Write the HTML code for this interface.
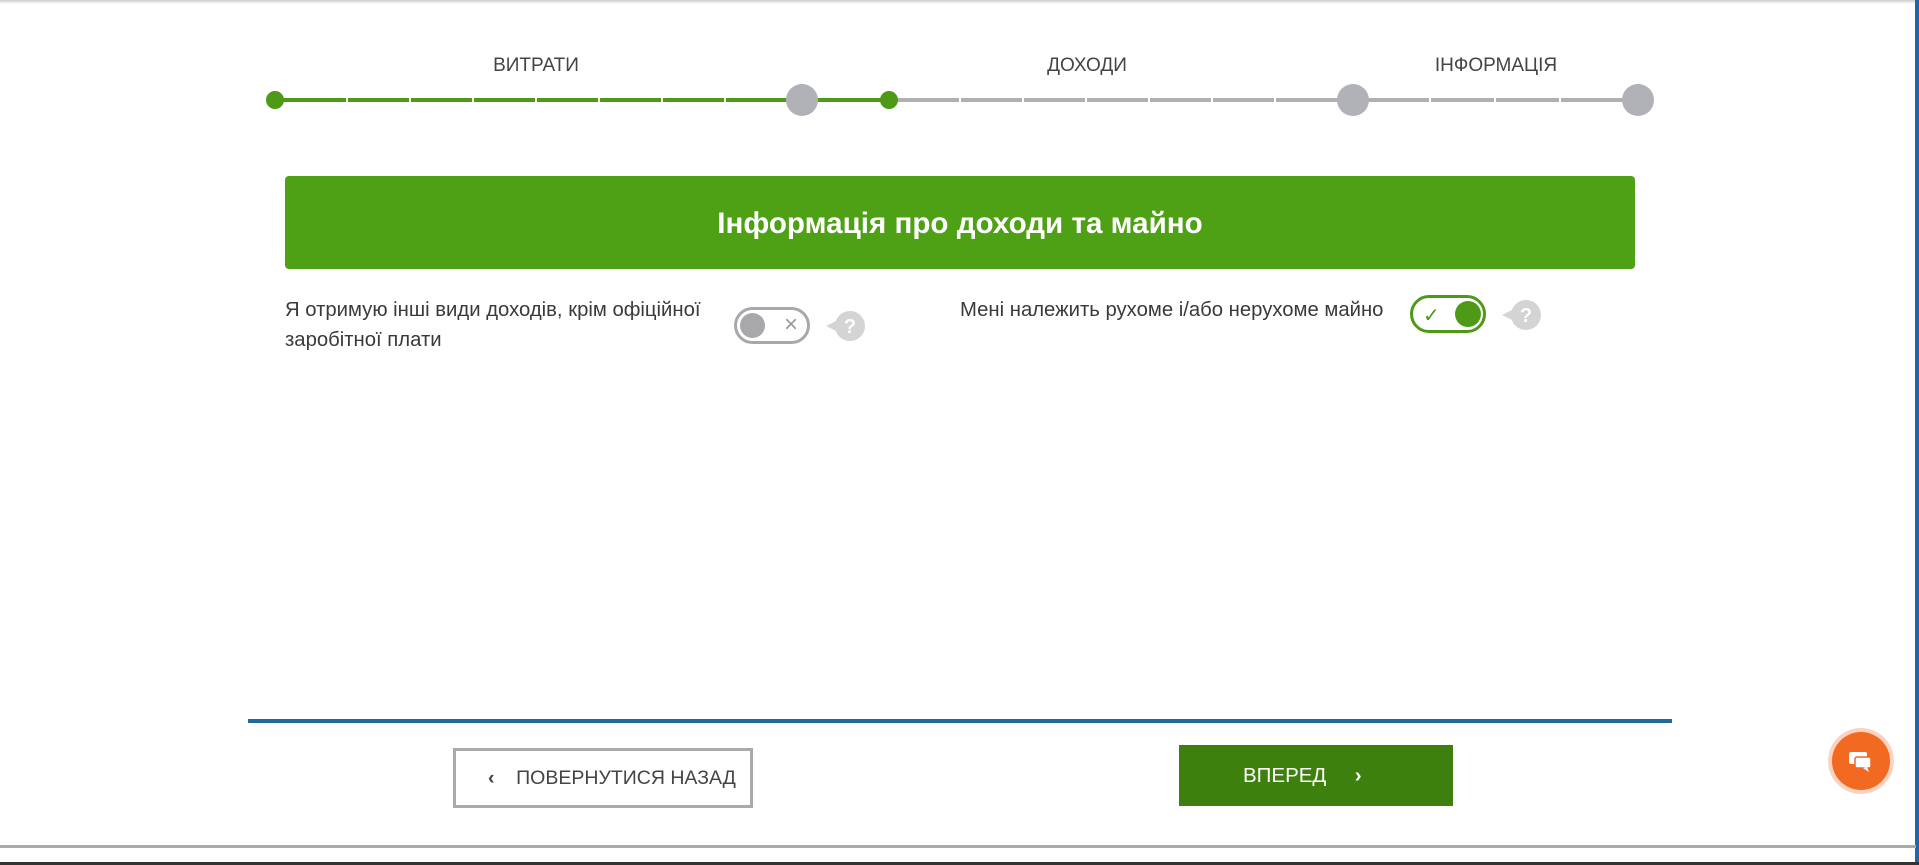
<!DOCTYPE html>
<html><head><meta charset="utf-8"><style>
*{margin:0;padding:0;box-sizing:border-box}
body{width:1919px;height:865px;position:relative;overflow:hidden;background:#fff;font-family:"Liberation Sans",sans-serif;color:#333}
.a{position:absolute}
.lbl{font-size:19px;color:#444;top:55px;transform:translateX(-50%)}
.txt{font-size:20.3px;color:#3a3a3a;line-height:30px}
</style></head><body>
<div class="a" style="left:0;top:0;width:1919px;height:4px;background:linear-gradient(#ccc,#fff)"></div>
<div class="a" style="right:0;top:0;width:4px;height:865px;background:#1f67a8"></div>
<div class="a lbl" style="left:536px">ВИТРАТИ</div>
<div class="a lbl" style="left:1087px">ДОХОДИ</div>
<div class="a lbl" style="left:1496px">ІНФОРМАЦІЯ</div>
<svg class="a" style="left:0;top:0" width="1919" height="130">
<g stroke-width="4">
<line x1="275" y1="100" x2="889" y2="100" stroke="#4e9a17"/>
<line x1="889" y1="100" x2="1638" y2="100" stroke="#b0b0b4"/>
<g stroke="#fff" stroke-width="2">
<line x1="347" y1="96" x2="347" y2="104"/><line x1="410" y1="96" x2="410" y2="104"/><line x1="473" y1="96" x2="473" y2="104"/><line x1="536" y1="96" x2="536" y2="104"/><line x1="599" y1="96" x2="599" y2="104"/><line x1="662" y1="96" x2="662" y2="104"/><line x1="725" y1="96" x2="725" y2="104"/>
<line x1="960" y1="96" x2="960" y2="104"/><line x1="1023" y1="96" x2="1023" y2="104"/><line x1="1086" y1="96" x2="1086" y2="104"/><line x1="1149" y1="96" x2="1149" y2="104"/><line x1="1212" y1="96" x2="1212" y2="104"/><line x1="1275" y1="96" x2="1275" y2="104"/>
<line x1="1430" y1="96" x2="1430" y2="104"/><line x1="1495" y1="96" x2="1495" y2="104"/><line x1="1560" y1="96" x2="1560" y2="104"/>
</g></g>
<circle cx="275" cy="100" r="9" fill="#4e9a17"/>
<circle cx="802" cy="100" r="16" fill="#b0b2b8"/>
<circle cx="889" cy="100" r="9" fill="#4e9a17"/>
<circle cx="1353" cy="100" r="16" fill="#b0b2b8"/>
<circle cx="1638" cy="100" r="16" fill="#b0b2b8"/>
</svg>
<div class="a" style="left:285px;top:176px;width:1350px;height:93px;background:#4ea014;border-radius:4px;color:#fff;font-size:29.6px;font-weight:bold;text-align:center;line-height:96px">Інформація про доходи та майно</div>
<div class="a txt" style="left:285px;top:295px">Я отримую інші види доходів, крім офіційної<br>заробітної плати</div>
<div class="a" style="left:734px;top:307px;width:76px;height:37px;border:3px solid #a8a8ac;border-radius:19px"><div class="a" style="left:3px;top:3px;width:25px;height:25px;border-radius:50%;background:#a8a8ac"></div><div class="a" style="left:47px;top:1px;font-size:24px;color:#999">×</div></div>
<svg class="a" style="left:826px;top:310px" width="42" height="32"><path d="M0 16 L12 10 L12 22Z" fill="#d4d4d4"/><circle cx="24" cy="16" r="15" fill="#d4d4d4"/><text x="24" y="23" font-size="20" font-weight="bold" fill="#fff" text-anchor="middle" font-family="Liberation Sans">?</text></svg>
<div class="a txt" style="left:960px;top:295px">Мені належить рухоме і/або нерухоме майно</div>
<div class="a" style="left:1410px;top:295px;width:76px;height:38px;border:3px solid #4e9a17;border-radius:19px"><div class="a" style="left:42px;top:3px;width:26px;height:26px;border-radius:50%;background:#4e9a17"></div><div class="a" style="left:10px;top:5px;font-size:20px;color:#4e9a17">✓</div></div>
<svg class="a" style="left:1502px;top:299px" width="42" height="32"><path d="M0 16 L12 10 L12 22Z" fill="#d4d4d4"/><circle cx="24" cy="16" r="15" fill="#d4d4d4"/><text x="24" y="23" font-size="20" font-weight="bold" fill="#fff" text-anchor="middle" font-family="Liberation Sans">?</text></svg>
<div class="a" style="left:248px;top:719px;width:1424px;height:4px;background:#1f6a9a"></div>
<div class="a" style="left:453px;top:748px;width:300px;height:60px;border:3px solid #aaa;font-size:19.5px;color:#444;line-height:54px;padding-left:32px"><b>‹</b>&nbsp;&nbsp;&nbsp;&nbsp;ПОВЕРНУТИСЯ НАЗАД</div>
<div class="a" style="left:1179px;top:745px;width:274px;height:61px;background:#3e800d;color:#fff;font-size:20.5px;line-height:61px;padding-left:64px">ВПЕРЕД&nbsp;&nbsp;&nbsp;&nbsp;&nbsp;<b>›</b></div>
<div class="a" style="left:1832px;top:732px;width:58px;height:58px;border-radius:50%;background:#f26a22;box-shadow:0 0 0 4px #fbd3c0"></div>
<svg class="a" style="left:1847px;top:748px" width="28" height="26"><rect x="2" y="4" width="18" height="12" rx="2" fill="#fff"/><rect x="8" y="9" width="16" height="11" rx="2" fill="#fff" stroke="#f26a22" stroke-width="1.5"/><path d="M20 19 L22 24 L16 20Z" fill="#fff"/></svg>
<div class="a" style="left:0;top:845px;width:1916px;height:3px;background:#aaa"></div>
<div class="a" style="left:0;top:862px;width:1919px;height:3px;background:#333"></div>
</body></html>
